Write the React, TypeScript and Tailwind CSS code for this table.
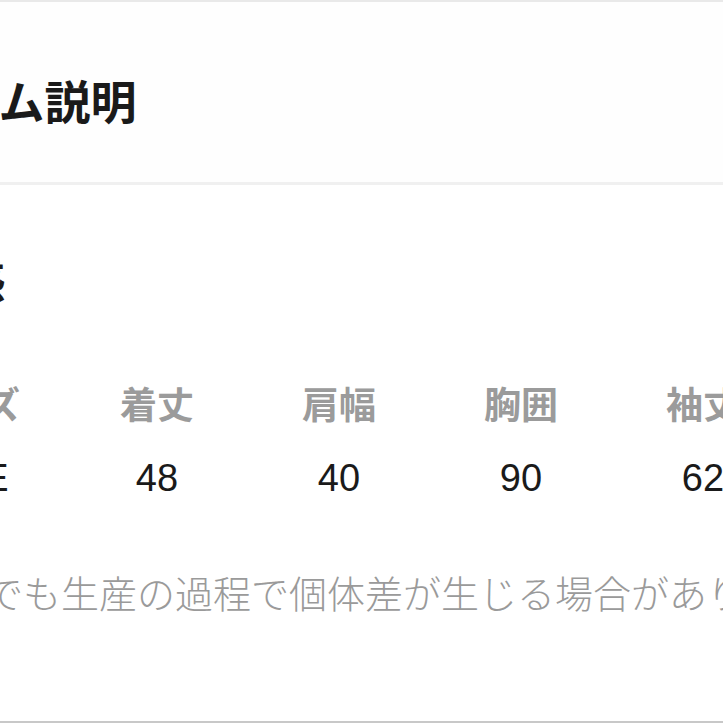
import React from "react";

const jp = { fontFamily: '"Noto Sans CJK JP", "Noto Sans", sans-serif' };
const num = { fontFamily: '"Liberation Sans", Arial, sans-serif' };

const headers = ["サイズ", "着丈", "肩幅", "胸囲", "袖丈"];
const values = ["FREE", "48", "40", "90", "62"];

export default function App() {
  return (
    <div
      className="w-[723px] h-[723px] overflow-hidden bg-white flex flex-col border-t-2 border-[#e9e9e9]"
      style={jp}
    >
      <div className="h-[180px] shrink-0 pt-[74px] bg-[#fefefe]">
        <h2 className="-ml-[135px] whitespace-nowrap text-[46px] leading-none font-bold text-[#1a1a1a]">
          アイテム説明
        </h2>
      </div>
      <div className="h-[3px] shrink-0 bg-[#f0f0f0]" />
      <div className="flex-1 flex flex-col">
        <h3 className="mt-[71px] -ml-[177px] whitespace-nowrap text-[46px] leading-none font-bold text-[#1a1a1a]">
          サイズ感
        </h3>
        <div className="mt-[83px] -ml-[136px] flex whitespace-nowrap">
          {headers.map((h, i) => (
            <div
              key={h}
              className={`${i === 0 ? "w-[202px]" : "w-[182px]"} shrink-0 text-center text-[37px] leading-none font-bold text-[#9b9b9b]`}
            >
              {h}
            </div>
          ))}
        </div>
        <div className="mt-[37px] -ml-[136px] flex whitespace-nowrap" style={num}>
          {values.map((v, i) => (
            <div
              key={v}
              className={`${i === 0 ? "w-[202px] pr-[14px]" : "w-[182px]"} shrink-0 text-center text-[38px] leading-none text-[#1a1a1a]`}
            >
              {v}
            </div>
          ))}
        </div>
        <p className="mt-[76px] -ml-[15px] whitespace-nowrap text-[38px] leading-none font-light text-[#9a9a9a]">
          でも生産の過程で個体差が生じる場合があります。
        </p>
      </div>
      <div className="h-[2px] shrink-0 bg-[#c8c8c8]" />
    </div>
  );
}
